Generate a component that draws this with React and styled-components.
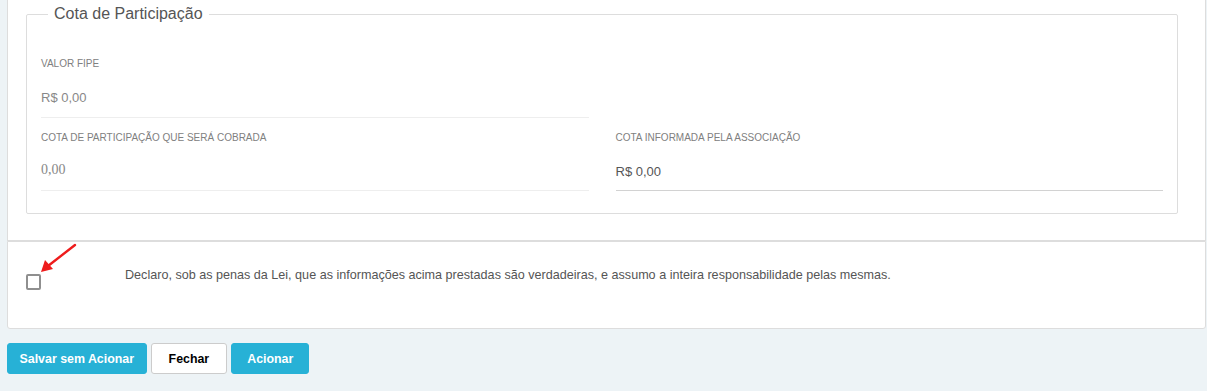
import React, { useState } from "react";
import styled, { createGlobalStyle } from "styled-components";

const $accent = "#27b1d6";
const $line = "#dddddd";

const Global = createGlobalStyle`
  html, body {
    margin: 0;
    background: #edf3f6;
    font-family: "Liberation Sans", Arial, sans-serif;
  }
`;

const Page = styled.div`
  padding: 0 1px 0 7px;
`;

const Panel = styled.div`
  position: relative;
  background: #fff;
  border: 1px solid ${$line};
  border-top: ${(p) => (p.$open ? "none" : `1px solid ${$line}`)};
  border-radius: ${(p) => (p.$open ? "0" : "0 0 3px 3px")};
  padding: ${(p) => p.$pad};
`;

const Fieldset = styled.fieldset`
  margin: 0;
  padding: 34px 14px 22px 14px;
  border: 1px solid ${$line};
  border-radius: 2px;
  min-width: 0;
`;

const Legend = styled.legend`
  margin-left: 7px;
  padding: 0 6px;
  font-size: 16px;
  line-height: 20px;
  color: #555;
`;

const Grid = styled.div`
  display: grid;
  grid-template-columns: 1fr 1fr;
  column-gap: 27px;
  row-gap: 14px;
`;

const Field = styled.div`
  border-bottom: 1px solid ${(p) => (p.$strong ? "#d2d2d2" : "#eeeeee")};
  padding-bottom: ${(p) => p.$pb || 9}px;
`;

const Label = styled.div`
  font-size: 10px;
  line-height: 12px;
  color: #808080;
  text-transform: uppercase;
  margin-bottom: 18px;
`;

const Value = styled.div`
  font-family: ${(p) =>
    p.$serif ? '"Liberation Serif", "Times New Roman", serif' : '"Liberation Sans", Arial, sans-serif'};
  font-size: ${(p) => (p.$serif ? 14 : 13)}px;
  line-height: 20px;
  color: ${(p) => (p.$dark ? "#555" : "#888")};
  margin-top: ${(p) => (p.$serif ? -2 : 0)}px;
`;

const Declare = styled.label`
  display: flex;
  align-items: flex-start;
  cursor: pointer;
`;

const Box = styled.span`
  box-sizing: border-box;
  width: 15px;
  height: 16px;
  margin-top: 6px;
  border: 2px solid #8f8f8f;
  border-radius: 2px;
  background: ${(p) => (p.$on ? $accent : "#fff")};
  flex: none;
`;

const DeclareText = styled.span`
  margin-left: 84px;
  font-size: 12.6px;
  line-height: 14px;
  color: #555;
`;

const Arrow = styled.svg`
  position: absolute;
  left: 22px;
  top: 1px;
  pointer-events: none;
`;

const Actions = styled.div`
  display: flex;
  gap: 4px;
  padding-top: 14px;
`;

const Button = styled.button`
  height: 31px;
  padding: 0 ${(p) => p.$px || 13}px;
  border-radius: 3px;
  border: 1px solid ${(p) => (p.$light ? "#cccccc" : $accent)};
  background: ${(p) => (p.$light ? "#fff" : $accent)};
  color: ${(p) => (p.$light ? "#000" : "#fff")};
  font-family: "Liberation Sans", Arial, sans-serif;
  font-weight: bold;
  font-size: 12.4px;
  cursor: pointer;
`;

export default function App() {
  const [checked, setChecked] = useState(false);

  return (
    <Page>
      <Global />
      <Panel $open $pad="4px 27px 26px 18px">
        <Fieldset>
          <Legend>Cota de Participação</Legend>
          <Grid>
            <Field>
              <Label>Valor FIPE</Label>
              <Value>R$ 0,00</Value>
            </Field>
            <div />
            <Field $pb={8}>
              <Label>Cota de participação que será cobrada</Label>
              <Value $serif>0,00</Value>
            </Field>
            <Field $strong $pb={8}>
              <Label>Cota informada pela associação</Label>
              <Value $dark>R$ 0,00</Value>
            </Field>
          </Grid>
        </Fieldset>
      </Panel>
      <Panel $pad="26px 18px 38px 18px">
        <Declare onClick={() => setChecked(!checked)}>
          <Box $on={checked} />
          <DeclareText>
            Declaro, sob as penas da Lei, que as informações acima prestadas são verdadeiras, e assumo a inteira
            responsabilidade pelas mesmas.
          </DeclareText>
        </Declare>
        <Arrow width="50" height="36" viewBox="0 0 50 36">
          <line x1="45" y1="2" x2="18" y2="23" stroke="#ee1c1c" strokeWidth="2.4" strokeLinecap="round" />
          <polygon points="11,29 15,17 23,26" fill="#ee1c1c" />
        </Arrow>
      </Panel>
      <Actions>
        <Button $px={11.5}>Salvar sem Acionar</Button>
        <Button $light $px={17}>Fechar</Button>
        <Button $px={15}>Acionar</Button>
      </Actions>
    </Page>
  );
}
